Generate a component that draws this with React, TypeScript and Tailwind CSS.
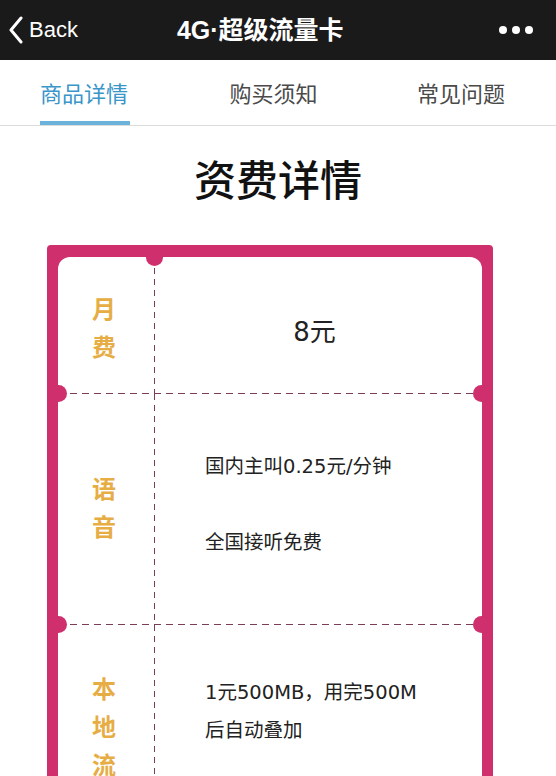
import React from 'react'

const font = { fontFamily: '"Liberation Sans", "Noto Sans CJK SC", sans-serif' }
const bodyFont = { fontFamily: '"DejaVu Sans", "Noto Sans CJK SC", sans-serif' }

const Notch = ({ className }: { className: string }) => <div className={`absolute w-[17px] h-[17px] rounded-full bg-[#cf2f6d] ${className}`} />

const HDash = () => <div className="h-px w-full bg-[repeating-linear-gradient(to_right,#7a3d58_0_7px,transparent_7px_12px)]" />

const VDash = () => <div className="w-px self-stretch bg-[repeating-linear-gradient(to_bottom,#7a3d58_0_6px,transparent_6px_11px)]" />

const Label = ({ chars, className }: { chars: string[]; className?: string }) => (
  <div className={`w-[96px] flex flex-col items-center pr-[4px] text-[24px] leading-[38px] font-bold text-[#e7ad45] ${className ?? ''}`}>
    {chars.map((c) => (
      <span key={c}>{c}</span>
    ))}
  </div>
)

export default function App() {
  return (
    <div className="w-[556px] bg-white overflow-hidden" style={font}>
      {/* top bar */}
      <div className="h-[60px] bg-[#1b1a1b] flex items-center text-white">
        <div className="flex items-center pl-[8px]">
          <svg width="16" height="28" viewBox="0 0 16 28" className="mr-[5px]">
            <polyline points="13,2 3,14 13,26" fill="none" stroke="white" strokeWidth="3" strokeLinecap="round" strokeLinejoin="round" />
          </svg>
          <span className="text-[22px] leading-none">Back</span>
        </div>
        <div className="ml-[99px] text-[25px] font-bold leading-none">4G·超级流量卡</div>
        <div className="ml-auto pr-[23px] flex gap-[5px]">
          <span className="w-[8px] h-[8px] rounded-full bg-white" />
          <span className="w-[8px] h-[8px] rounded-full bg-white" />
          <span className="w-[8px] h-[8px] rounded-full bg-white" />
        </div>
      </div>

      {/* tabs */}
      <div className="h-[66px] flex justify-between pl-[40px] pr-[51px] border-b border-[#dcdcdc] text-[22px]">
        <div className="flex flex-col justify-between">
          <span className="pt-[18px] text-[#3a95c9]">商品详情</span>
          <span className="h-[4px] w-[90px] bg-[#6cb3dc]" />
        </div>
        <span className="pt-[18px] text-[#4a4a4a]">购买须知</span>
        <span className="pt-[18px] text-[#4a4a4a]">常见问题</span>
      </div>

      {/* title */}
      <div className="pt-[31px] pb-[38px] text-center text-[42px] leading-[50px] font-medium text-[#111]">资费详情</div>

      {/* tariff card */}
      <div className="ml-[47px] w-[446px] bg-[#cf2f6d] rounded-t-[4px] pt-[12px] px-[11px]">
        <div className="relative bg-white rounded-t-[12px] text-[#222]" style={bodyFont}>
          <Notch className="top-[-8px] left-[88px]" />
          <Notch className="top-[128px] left-[-8px]" />
          <Notch className="top-[128px] right-[-8px]" />
          <Notch className="top-[359px] left-[-8px]" />
          <Notch className="top-[359px] right-[-8px]" />

          <div className="flex h-[136px]">
            <Label chars={['月', '费']} className="justify-center pt-[8px]" />
            <VDash />
            <div className="flex-1 flex items-center justify-center pt-[14px] pr-[8px] text-[26px]">8元</div>
          </div>
          <HDash />

          <div className="flex h-[230px]">
            <Label chars={['语', '音']} className="justify-center leading-[35px]" />
            <VDash />
            <div className="flex-1 pl-[50px] pt-[58px] text-[19.5px] leading-[30px]">
              <div>国内主叫0.25元/分钟</div>
              <div className="mt-[46px]">全国接听免费</div>
            </div>
          </div>
          <HDash />

          <div className="flex h-[300px]">
            <Label chars={['本', '地', '流', '量']} className="pt-[46px] leading-[37.5px]" />
            <VDash />
            <div className="flex-1 pl-[50px] pt-[49px] text-[19.5px] leading-[38px]">
              <div>1元500MB，用完500M</div>
              <div>后自动叠加</div>
            </div>
          </div>
        </div>
      </div>
    </div>
  )
}
